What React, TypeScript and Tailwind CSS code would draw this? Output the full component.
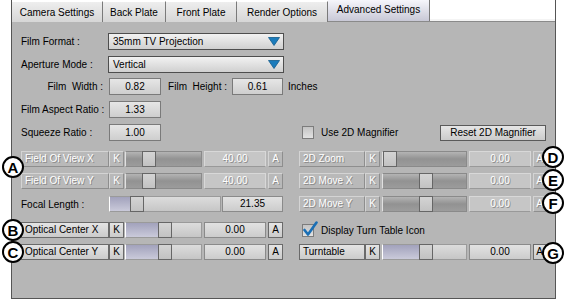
import React from 'react';

const emb = 'text-white [text-shadow:1px_1px_0_#8a8a8a]';

const Badge = ({ l, cls }: { l: string; cls: string }) => (
  <div className={`absolute ${cls} w-[22px] h-[22px] rounded-full border-2 border-black bg-white flex items-center justify-center text-[15px] font-bold leading-none text-black`}>
    {l}
  </div>
);

const Tab = ({ text, cls, active }: { text: string; cls: string; active?: boolean }) => (
  <div
    className={`${cls} h-full flex items-center justify-center border-r border-[#7a7a7a] ${
      active ? 'bg-linear-to-b from-[#f6f6fb] to-[#c8c8d6] pb-[2px]' : 'bg-linear-to-b from-[#eeeeee] to-[#d6d6d6] mt-[1px] border-t border-t-white'
    }`}
  >
    {text}
  </div>
);

const Box = ({ text, cls, disabled, center }: { text: string; cls: string; disabled?: boolean; center?: boolean }) => (
  <div
    className={`${cls} h-[16px] flex items-center ${center ? 'justify-center' : 'pl-[3px]'} border leading-none ${
      disabled ? `bg-[#b9b9b9] border-[#d4d4d4] border-r-[#8e8e8e] border-b-[#8e8e8e] ${emb}` : 'bg-linear-to-b from-[#e4e4e4] to-[#cbcbcb] border-[#6a6a6a]'
    }`}
  >
    {text}
  </div>
);

const Slider = ({ cls, pos, disabled, fill }: { cls: string; pos: number; disabled?: boolean; fill?: boolean }) => (
  <div
    className={`${cls} relative h-[16px] border ${
      disabled ? 'bg-linear-to-b from-[#b4b4b4] via-[#929292] to-[#9c9c9c] border-[#8a8a8a] border-l-[#e0e0e0]' : 'bg-linear-to-b from-[#dcdcdc] to-[#c6c6c6] border-[#9a9a9a] border-l-white'
    }`}
  >
    {fill && <div className="absolute left-0 top-0 bottom-0 bg-linear-to-b from-[#a2a2bc] to-[#cacada]" style={{ width: pos }} />}
    <div className="absolute top-[-1px] h-[16px] w-[14px] border border-[#666] bg-linear-to-b from-[#d4d4d4] to-[#c2c2c2]" style={{ left: pos }} />
  </div>
);

const Value = ({ v, cls, disabled }: { v: string; cls: string; disabled?: boolean }) => (
  <div
    className={`${cls} h-[16px] flex items-center justify-center border leading-none ${
      disabled ? `bg-[#c6c6c6] border-[#d8d8d8] border-b-[#999] ${emb}` : 'bg-linear-to-b from-[#e2e2e2] to-[#cccccc] border-[#8a8a8a]'
    }`}
  >
    {v}
  </div>
);

const LeftRow = ({ label, disabled, pos, fill, v }: { label: string; disabled?: boolean; pos: number; fill?: boolean; v: string }) => (
  <div className="flex items-center w-[262px] h-[16px]">
    <Box text={label} cls="w-[88px]" disabled={disabled} />
    <Box text="K" cls="w-[15px]" disabled={disabled} center />
    <Slider cls="ml-[1px] w-[77px]" pos={pos} disabled={disabled} fill={fill} />
    <Value v={v} cls="ml-[2px] w-[62px]" disabled={disabled} />
    <Box text="A" cls="ml-[2px] w-[15px]" disabled={disabled} center />
  </div>
);

const RightRow = ({ label, disabled, pos, fill, v }: { label: string; disabled?: boolean; pos: number; fill?: boolean; v: string }) => (
  <div className="flex items-center w-[247px] h-[16px]">
    <Box text={label} cls="w-[66px]" disabled={disabled} />
    <Box text="K" cls="w-[15px]" disabled={disabled} center />
    <Slider cls="ml-[2px] w-[85px]" pos={pos} disabled={disabled} fill={fill} />
    <Value v={v} cls="ml-[2px] w-[62px]" disabled={disabled} />
    <Box text="A" cls="ml-[2px] w-[13px]" disabled={disabled} center />
  </div>
);

const Check = ({ on }: { on?: boolean }) => (
  <div className="relative w-[12px] h-[13px] border border-[#7c7c7c] bg-linear-to-b from-[#c4c4c4] to-[#e2e2e2]">
    {on && (
      <svg className="absolute left-[0px] top-[-4px]" width="15" height="16" viewBox="0 0 15 16">
        <path d="M1.5 9 L5 13.5 L13.5 1.5" fill="none" stroke="#1a6fb5" strokeWidth="2.6" strokeLinecap="round" strokeLinejoin="round" />
      </svg>
    )}
  </div>
);

const Dropdown = ({ text }: { text: string }) => (
  <div className="w-[176px] h-[17px] flex items-center justify-between pl-[4px] pr-[3px] border border-[#4e4e4e] bg-linear-to-b from-[#f2f2f2] to-[#d0d0d0]">
    <span>{text}</span>
    <svg width="12" height="9" viewBox="0 0 12 9">
      <polygon points="0.5,0.5 11.5,0.5 6,8.5" fill="#1b7cbc" stroke="#125b8c" strokeWidth="0.8" />
    </svg>
  </div>
);

const Input = ({ v, cls }: { v: string; cls: string }) => (
  <div className={`${cls} h-[17px] flex items-center justify-center border border-[#7a7a7a] bg-linear-to-b from-[#e6e6e6] to-[#cecece]`}>{v}</div>
);

export default function App() {
  return (
    <div className="relative w-[567px] h-[302px] bg-white text-black text-[10px] font-['Liberation_Sans',Arial,sans-serif] overflow-hidden">
      <div className="ml-[11px] w-[545px] h-[299px] flex flex-col border-x border-b border-[#555]">
        <div className="flex h-[22px] border-b border-[#8a8a8a]">
          <Tab text="Camera Settings" cls="w-[91px]" />
          <Tab text="Back Plate" cls="w-[63px]" />
          <Tab text="Front Plate" cls="w-[71px]" />
          <Tab text="Render Options" cls="w-[91px]" />
          <Tab text="Advanced Settings" cls="w-[102px]" active />
          <div className="flex-1 border-b-2 border-[#f4f4f4] bg-white" />
        </div>
        <div className="flex-1 bg-[#b6b6b6] pl-[9px] flex flex-col">
          <div className="mt-[11px] flex items-center h-[17px]">
            <div className="w-[87px]">Film Format :</div>
            <Dropdown text="35mm TV Projection" />
          </div>
          <div className="mt-[6px] flex items-center h-[17px]">
            <div className="w-[87px]">Aperture Mode :</div>
            <Dropdown text="Vertical" />
          </div>
          <div className="mt-[5px] flex items-center h-[17px]">
            <div className="w-[88px] text-right pr-[6px]">Film&nbsp; Width :</div>
            <Input v="0.82" cls="w-[52px]" />
            <div className="w-[71px] text-right pr-[5px]">Film&nbsp; Height :</div>
            <Input v="0.61" cls="w-[51px]" />
            <div className="ml-[5px]">Inches</div>
          </div>
          <div className="mt-[6px] flex items-center h-[17px]">
            <div className="w-[88px]">Film Aspect Ratio :</div>
            <Input v="1.33" cls="w-[52px]" />
          </div>
          <div className="mt-[6px] flex items-center h-[17px] w-[525px]">
            <div className="w-[88px]">Squeeze Ratio :</div>
            <Input v="1.00" cls="w-[52px]" />
            <div className="ml-[141px]">
              <Check />
            </div>
            <div className="ml-[7px]">Use 2D Magnifier</div>
            <div className="ml-auto w-[106px] h-[16px] flex items-center justify-center border border-[#5a5a5a] bg-linear-to-b from-[#e6e6e6] to-[#cbcbcb]">
              Reset 2D Magnifier
            </div>
          </div>

          <div className="mt-[10px] flex items-center">
            <LeftRow label="Field Of View X" disabled pos={16} v="40.00" />
            <div className="ml-[16px]">
              <RightRow label="2D Zoom" disabled pos={0} v="0.00" />
            </div>
          </div>
          <div className="mt-[6px] flex items-center">
            <LeftRow label="Field Of View Y" disabled pos={16} v="40.00" />
            <div className="ml-[16px]">
              <RightRow label="2D Move X" disabled pos={36} v="0.00" />
            </div>
          </div>
          <div className="mt-[7px] flex items-center">
            <div className="flex items-center w-[262px] h-[16px]">
              <div className="w-[88px]">Focal Length :</div>
              <Slider cls="w-[112px]" pos={20} fill />
              <Value v="21.35" cls="ml-[1px] w-[61px]" />
            </div>
            <div className="ml-[16px]">
              <RightRow label="2D Move Y" disabled pos={36} v="0.00" />
            </div>
          </div>
          <div className="mt-[10px] flex items-center">
            <LeftRow label="Optical Center X" pos={32} fill v="0.00" />
            <div className="ml-[19px] flex items-center">
              <Check on />
              <div className="ml-[7px]">Display Turn Table Icon</div>
            </div>
          </div>
          <div className="mt-[6px] flex items-center">
            <LeftRow label="Optical Center Y" pos={32} fill v="0.00" />
            <div className="ml-[16px]">
              <RightRow label="Turntable" pos={36} fill v="0.00" />
            </div>
          </div>
        </div>
      </div>

      <Badge l="A" cls="left-[2px] top-[156px]" />
      <Badge l="B" cls="left-[2px] top-[219px]" />
      <Badge l="C" cls="left-[2px] top-[241px]" />
      <Badge l="D" cls="left-[542px] top-[146px]" />
      <Badge l="E" cls="left-[542px] top-[169px]" />
      <Badge l="F" cls="left-[542px] top-[192px]" />
      <Badge l="G" cls="left-[542px] top-[242px]" />
    </div>
  );
}
